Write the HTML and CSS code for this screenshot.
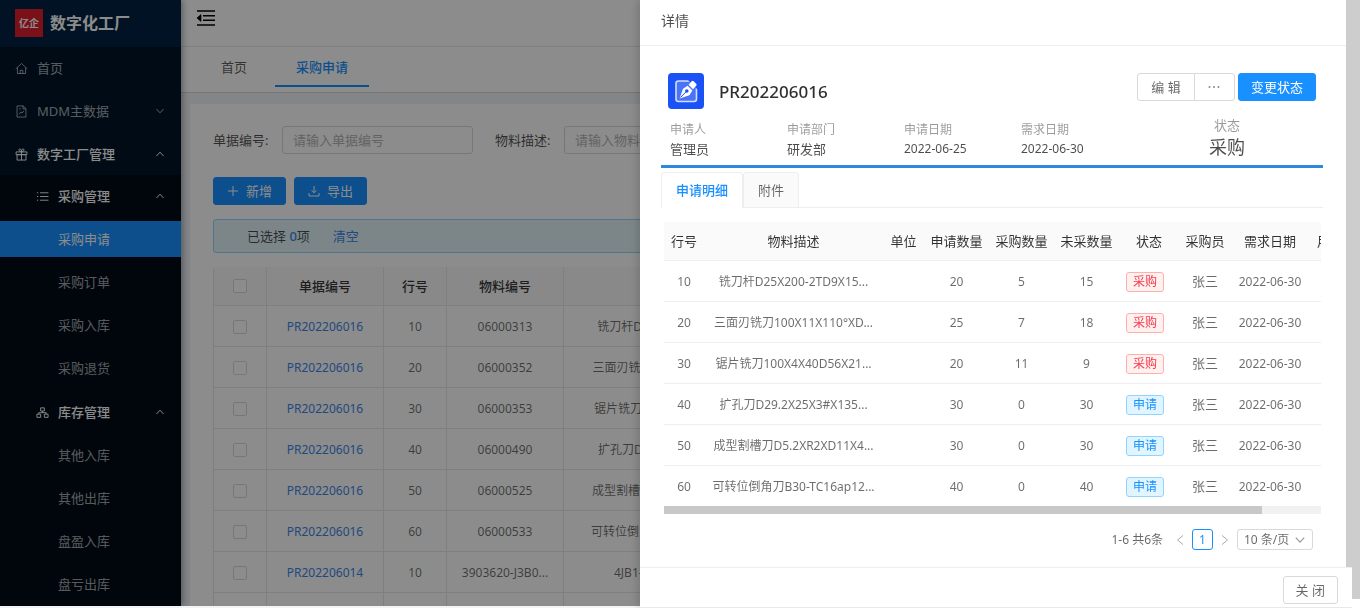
FILE: index.html
```html
<!DOCTYPE html>
<html lang="zh-CN">
<head>
<meta charset="utf-8">
<title>数字化工厂 - 采购申请</title>
<link rel="stylesheet" href="styles.css">
</head>
<body>
<svg class="defs" width="0" height="0" aria-hidden="true">
  <symbol id="up" viewBox="0 0 10 10"><path d="M1.500 7 5 3.200 8.500 7"/></symbol>
  <symbol id="down" viewBox="0 0 10 10"><path d="M1.500 3 5 6.800 8.500 3"/></symbol>
</svg>
<div class="app">
  <aside class="sider">
    <div class="brand"><span class="brand-mark">亿企</span><span class="brand-name">数字化工厂</span></div>
    <nav class="menu">
      <a class="item" href="#"><svg class="ico" viewBox="0 0 14 14"><path d="M.8 7.4 7 1.6l6.2 5.8M2.600 6v6.400h8.800V6M5.600 12.200V9h2.800v3.200"/></svg>首页</a>
      <button class="item"><svg class="ico" viewBox="0 0 14 14"><path d="M2.200 1h6.600l3 3v9H2.200zM8.600 1v3.200h3.200M4.400 10l2-2.600 1.400 1.200 1.800-2.400M4.400 4.200h2"/></svg>MDM主数据<svg class="arrow"><use href="#down"/></svg></button>
      <button class="item open"><svg class="ico" viewBox="0 0 14 14"><path d="M1.200 4.200h11.600v3H1.200zM2.200 7.200h9.600V13H2.200zM7 4.200V13M7 4.200C4 4.200 3.600 1 5.200 1 6.600 1 7 3 7 4.200 7 3 7.400 1 8.800 1c1.600 0 1.200 3.200-1.800 3.200"/></svg>数字工厂管理<svg class="arrow"><use href="#up"/></svg></button>
      <div class="submenu">
        <div class="group">
          <button class="item open sub"><svg class="ico" viewBox="0 0 14 14"><path d="M4.400 3h9M4.400 7h9M4.400 11h9M1 3h1.400M1 7h1.400M1 11h1.400"/></svg>采购管理<svg class="arrow"><use href="#up"/></svg></button>
          <a class="item leaf selected" href="#">采购申请</a>
          <a class="item leaf" href="#">采购订单</a>
          <a class="item leaf" href="#">采购入库</a>
          <a class="item leaf" href="#">采购退货</a>
        </div>
        <div class="group">
          <button class="item open sub"><svg class="ico" viewBox="0 0 14 14"><path d="M5 2h4v3.400H5zM1 8.800h4v3.400H1zM9 8.800h4v3.400H9zM7 5.400v1.800M3 8.800V7.200h8v1.600"/></svg>库存管理<svg class="arrow"><use href="#up"/></svg></button>
          <a class="item leaf" href="#">其他入库</a>
          <a class="item leaf" href="#">其他出库</a>
          <a class="item leaf" href="#">盘盈入库</a>
          <a class="item leaf" href="#">盘亏出库</a>
        </div>
      </div>
    </nav>
  </aside>
  <div class="main">
    <header class="topbar">
      <button class="fold" aria-label="收起菜单"><svg width="20" height="18" viewBox="0 0 20 18"><path d="M1 2h18M7 6.700h12M7 11.300h12M1 16h18" stroke="#000" stroke-width="1.600"/><path d="M5 5.600v6.800L1 9z"/></svg></button>
    </header>
    <nav class="page-tabs"><a href="#">首页</a><a class="active" href="#">采购申请</a></nav>
    <section class="card">
      <form class="search">
        <label for="q-no">单据编号:</label><input id="q-no" type="text" placeholder="请输入单据编号">
        <label for="q-desc">物料描述:</label><input id="q-desc" type="text" placeholder="请输入物料描述">
      </form>
      <div class="actions">
        <button class="btn primary"><svg width="12" height="12" viewBox="0 0 12 12"><path d="M6 1v10M1 6h10"/></svg>新增</button>
        <button class="btn primary"><svg width="12" height="12" viewBox="0 0 12 12"><path d="M6 1v6.600M3.600 5.400 6 7.800l2.400-2.400M1 8v3h10V8"/></svg>导出</button>
      </div>
      <div class="notice"><span>已选择 <b>0</b>项</span><a href="#">清空</a></div>
      <table class="list">
        <colgroup><col class="w53"><col class="w117"><col class="w63"><col class="w117"><col class="w217"><col></colgroup>
        <thead><tr><th><input type="checkbox" aria-label="全选"></th><th>单据编号</th><th>行号</th><th>物料编号</th><th>物料描述</th><th></th></tr></thead>
        <tbody>
          <tr><td><input type="checkbox" aria-label="选择第1行"></td><td><a href="#">PR202206016</a></td><td>10</td><td>06000313</td><td class="desc">铣刀杆D25X200-2TD9X15...</td><td></td></tr>
          <tr><td><input type="checkbox" aria-label="选择第2行"></td><td><a href="#">PR202206016</a></td><td>20</td><td>06000352</td><td class="desc">三面刃铣刀100X11X110°XD...</td><td></td></tr>
          <tr><td><input type="checkbox" aria-label="选择第3行"></td><td><a href="#">PR202206016</a></td><td>30</td><td>06000353</td><td class="desc">锯片铣刀100X4X40D56X21...</td><td></td></tr>
          <tr><td><input type="checkbox" aria-label="选择第4行"></td><td><a href="#">PR202206016</a></td><td>40</td><td>06000490</td><td class="desc">扩孔刀D29.2X25X3#X135...</td><td></td></tr>
          <tr><td><input type="checkbox" aria-label="选择第5行"></td><td><a href="#">PR202206016</a></td><td>50</td><td>06000525</td><td class="desc">成型割槽刀D5.2XR2XD11X4...</td><td></td></tr>
          <tr><td><input type="checkbox" aria-label="选择第6行"></td><td><a href="#">PR202206016</a></td><td>60</td><td>06000533</td><td class="desc">可转位倒角刀B30-TC16ap12...</td><td></td></tr>
          <tr><td><input type="checkbox" aria-label="选择第7行"></td><td><a href="#">PR202206014</a></td><td>10</td><td>3903620-J3B0...</td><td class="desc">4JB1-3903620-J3B0-1</td><td></td></tr>
          <tr><td></td><td></td><td></td><td></td><td></td><td></td></tr>
        </tbody>
      </table>
    </section>
  </div>
</div>
<div class="mask"></div>
<div class="drawer" role="dialog" aria-labelledby="drawer-title">
  <div class="drawer-top">
    <div class="drawer-page">
      <h2 id="drawer-title" class="drawer-title">详情</h2>
      <div class="detail">
        <div class="head">
          <svg class="doc-icon" width="36" height="36" viewBox="0 0 36 36" aria-hidden="true"><rect width="36" height="36" rx="4" fill="#1b52f5"/><rect x="8" y="8" width="20.500" height="20.500" rx="2.500" fill="#4a74f7" stroke="#d4defd" stroke-width="1.600"/><path d="M19 6h11v11z" fill="#1b52f5"/><path d="m11.600 25.400 3.400-9.600 4.600-3 4.800 4.600-3 4.800z" fill="#fff"/><path d="m12.500 24.500 5.400-5.600" stroke="#1b52f5" stroke-width="1"/><circle cx="18.800" cy="18" r="1.800" fill="#1b52f5"/><path d="m20.600 11.800 3-3.600q1-.9 2 0l2.600 2.600q.9 1 0 2l-3.200 3.400z" fill="#fff"/></svg>
          <h1>PR202206016</h1>
          <div class="head-actions">
            <div class="btn-group"><button class="btn">编 辑</button><button class="btn" aria-label="更多"><svg width="12" height="4" viewBox="0 0 12 4"><circle cx="1.500" cy="2" r="1"/><circle cx="6" cy="2" r="1"/><circle cx="10.500" cy="2" r="1"/></svg></button></div>
            <button class="btn primary">变更状态</button>
          </div>
        </div>
        <div class="info">
          <dl><dt>申请人</dt><dd>管理员</dd></dl>
          <dl><dt>申请部门</dt><dd>研发部</dd></dl>
          <dl><dt>申请日期</dt><dd class="num">2022-06-25</dd></dl>
          <dl><dt>需求日期</dt><dd class="num">2022-06-30</dd></dl>
          <dl class="state"><dt>状态</dt><dd>采购</dd></dl>
        </div>
        <div class="card-tabs"><button class="active">申请明细</button><button>附件</button></div>
        <div class="lines-wrap">
          <table class="lines">
            <colgroup><col class="w40"><col class="w179"><col class="w41"><col class="w65"><col class="w65"><col class="w65"><col class="w60"><col class="w52"><col class="w78"><col class="w68"></colgroup>
            <thead><tr><th>行号</th><th>物料描述</th><th>单位</th><th>申请数量</th><th>采购数量</th><th>未采数量</th><th>状态</th><th>采购员</th><th>需求日期</th><th>用途说明</th></tr></thead>
            <tbody>
              <tr><td>10</td><td class="desc">铣刀杆D25X200-2TD9X15...</td><td></td><td>20</td><td>5</td><td>15</td><td><span class="tag red">采购</span></td><td class="cn">张三</td><td>2022-06-30</td><td></td></tr>
              <tr><td>20</td><td class="desc">三面刃铣刀100X11X110°XD...</td><td></td><td>25</td><td>7</td><td>18</td><td><span class="tag red">采购</span></td><td class="cn">张三</td><td>2022-06-30</td><td></td></tr>
              <tr><td>30</td><td class="desc">锯片铣刀100X4X40D56X21...</td><td></td><td>20</td><td>11</td><td>9</td><td><span class="tag red">采购</span></td><td class="cn">张三</td><td>2022-06-30</td><td></td></tr>
              <tr><td>40</td><td class="desc">扩孔刀D29.2X25X3#X135...</td><td></td><td>30</td><td>0</td><td>30</td><td><span class="tag blue">申请</span></td><td class="cn">张三</td><td>2022-06-30</td><td></td></tr>
              <tr><td>50</td><td class="desc">成型割槽刀D5.2XR2XD11X4...</td><td></td><td>30</td><td>0</td><td>30</td><td><span class="tag blue">申请</span></td><td class="cn">张三</td><td>2022-06-30</td><td></td></tr>
              <tr><td>60</td><td class="desc">可转位倒角刀B30-TC16ap12...</td><td></td><td>40</td><td>0</td><td>40</td><td><span class="tag blue">申请</span></td><td class="cn">张三</td><td>2022-06-30</td><td></td></tr>
            </tbody>
          </table>
          <div class="hbar"><div class="hthumb"></div></div>
        </div>
        <div class="pager">
          <span class="total">1-6 共6条</span>
          <button class="step" aria-label="上一页"><svg width="8" height="12" viewBox="0 0 8 12"><path d="M7 1.500 1.500 6 7 10.500"/></svg></button>
          <button class="page">1</button>
          <button class="step" aria-label="下一页"><svg width="8" height="12" viewBox="0 0 8 12"><path d="M1 1.500 6.500 6 1 10.500"/></svg></button>
          <label class="size"><select aria-label="每页条数"><option>10 条/页</option></select><svg width="12" height="12"><use href="#down"/></svg></label>
        </div>
      </div>
    </div>
    <div class="vbar"></div>
  </div>
  <div class="drawer-bottom">
    <footer class="drawer-footer"><button class="btn">关 闭</button></footer>
    <div class="vbar narrow"></div>
  </div>
</div>
</body>
</html>
```

FILE: styles.css
```css
* { box-sizing: border-box; }
body {
  margin: 0;
  height: 100vh;
  padding-bottom: 2px;
  overflow: hidden;
  background: #f4f4f6;
  color: rgba(0, 0, 0, .7);
  font: 13px/20px "Noto Sans", "Noto Sans CJK SC", sans-serif;
}
a { color: #3d86e8; text-decoration: none; }
button, input, select { font: inherit; color: inherit; }
button { border: 0; padding: 0; background: none; cursor: pointer; }
svg { fill: none; stroke: currentColor; flex: none; }
h1, h2, dl, dd { margin: 0; }
.defs { position: absolute; }
.app { display: flex; height: 100%; overflow: hidden; background: #f0f2f5; }

/* sidebar */
.sider { width: 181px; flex: none; background: #001529; color: rgba(255, 255, 255, .65); overflow: hidden; box-shadow: 2px 0 6px rgba(0, 21, 41, .35); z-index: 1; }
.brand { display: flex; align-items: center; gap: 7px; height: 47px; padding: 0 15px 2px; background: #002140; }
.brand-mark { display: grid; place-items: center; width: 28px; height: 28px; background: #e0202c; color: #fff; font-size: 10px; font-weight: 700; }
.brand-name { color: #fff; font-size: 16px; font-weight: 700; }
.menu, .group { display: flex; flex-direction: column; gap: 7px; }
.menu { padding-top: 3px; }
.item { display: flex; align-items: center; gap: 9px; width: 100%; height: 36px; padding: 0 16px 0 15px; color: inherit; text-align: left; }
.item.open { color: #fff; font-weight: 500; }
.ico { width: 13px; height: 13px; }
.arrow { width: 10px; height: 10px; margin-left: auto; }
.submenu { margin-top: -4px; background: #000c17; }
.group { padding: 3px 0 5px; }
.sub { padding-left: 36px; }
.leaf { padding-left: 58px; }
.item.selected { background: #1890ff; color: #fff; }

/* page area */
.main { flex: 1; min-width: 0; display: flex; flex-direction: column; }
.topbar { height: 47px; padding: 9px 15px; background: #fff; border-bottom: 1px solid #e8e8e8; }
.fold { display: flex; }
.fold svg { fill: #000; }
.page-tabs { display: flex; gap: 7px; height: 46px; padding-left: 16px; background: #fff; border-bottom: 1px solid #d4d4d4; }
.page-tabs a { height: 40px; padding: 0 21px; line-height: 41px; color: rgba(0, 0, 0, .65); }
.page-tabs a:first-child { padding-left: 24px; }
.page-tabs .active { color: #1890ff; font-weight: 500; border-bottom: 2px solid #1890ff; }
.card { flex: 1; min-height: 0; margin: 11px 9px 0; padding: 22px 23px 0; background: #fff; overflow: hidden; }
.search { display: flex; align-items: center; }
.search label { width: 69px; flex: none; white-space: nowrap; }
.search input { width: 191px; flex: none; height: 28px; margin-right: 22px; padding: 0 10px; border: 1px solid #d9d9d9; border-radius: 3px; background: #fff; }
.search input::placeholder { color: #b4b4b4; }
.actions { display: flex; gap: 8px; margin: 23px 0 14px; }
.btn { display: inline-flex; align-items: center; justify-content: center; gap: 7px; height: 28px; padding: 0 12px; border: 1px solid #d9d9d9; border-radius: 3px; background: #fff; color: rgba(0, 0, 0, .6); white-space: nowrap; }
.actions .btn { width: 73px; padding: 0; }
.btn.primary { background: #1890ff; border-color: #1890ff; color: #fff; }
.notice { display: flex; gap: 23px; height: 34px; margin-bottom: 14px; padding-left: 33px; line-height: 32px; border: 1px solid #91d5ff; border-radius: 3px; background: #e2f5fa; }
.notice b { color: #3d86e8; font-weight: 500; }

table { border-collapse: separate; border-spacing: 0; table-layout: fixed; }
th, td { padding: 0; text-align: center; white-space: nowrap; overflow: hidden; }
th { font-size: 13px; font-weight: 400; color: rgba(0, 0, 0, .8); }
td { padding-top: 1px; font-size: 12px; color: rgba(0, 0, 0, .58); }
.list { width: 100%; border-left: 1px solid #e8e8e8; border-radius: 3px; }
.list th { height: 39px; background: #fafafa; border-right: 1px solid #e8e8e8; border-bottom: 1px solid #e8e8e8; font-weight: 500; }
.list td { height: 41px; padding-top: 2px; border-right: 1px solid #e8e8e8; border-bottom: 1px solid #e8e8e8; }
.list input { appearance: none; display: block; width: 14px; height: 14px; margin: 0 auto; border: 1px solid #d9d9d9; border-radius: 2px; background: #fff; }
.w40 { width: 40px; } .w41 { width: 41px; } .w52 { width: 52px; } .w53 { width: 53px; }
.w60 { width: 60px; } .w63 { width: 63px; } .w65 { width: 65px; } .w68 { width: 68px; }
.w78 { width: 78px; } .w117 { width: 117px; } .w179 { width: 179px; } .w217 { width: 217px; }

/* drawer */
.mask { position: fixed; inset: 0 0 2px; z-index: 2; background: rgba(0, 0, 0, .45); }
.drawer { position: fixed; inset: 0 0 0 auto; z-index: 3; width: 720px; display: flex; flex-direction: column; background: #fff; box-shadow: -3px 0 8px rgba(0, 0, 0, .15); }
.drawer-top { flex: 1; min-height: 0; display: flex; }
.drawer-page { flex: 1; min-width: 0; }
.vbar { width: 14px; background: #cdcdcd; }
.narrow { width: 8px; margin-bottom: 9px; }
.drawer-title { height: 46px; padding-left: 21px; border-bottom: 1px solid #eee; font-size: 14px; font-weight: 400; line-height: 42px; }
.detail { padding: 27px 23px 0 21px; }
.head { display: flex; height: 36px; padding: 0 7px; }
.doc-icon { stroke: none; }
.head h1 { margin-left: 15px; font-size: 17px; font-weight: 500; line-height: 38px; color: rgba(0, 0, 0, .82); }
.head-actions { display: flex; gap: 3px; margin-left: auto; }
.btn-group { display: flex; }
.btn-group .btn:first-child { width: 58px; border-radius: 3px 0 0 3px; }
.btn-group .btn + .btn { width: 41px; margin-left: -1px; border-radius: 0 3px 3px 0; }
.btn-group svg { fill: #888; stroke: none; }
.info { display: flex; padding: 12px 9px 0; height: 59px; border-bottom: 3px solid #2b8ae0; }
.info dl { width: 117px; }
.info dt { font-size: 12px; line-height: 18px; color: rgba(0, 0, 0, .4); }
.info dd { line-height: 20px; }
.info .num { font-size: 12px; }
.info .state { margin: -5px 0 0 auto; width: 174px; text-align: center; }
.info .state dt { font-size: 13px; }
.info .state dd { font-size: 18px; line-height: 26px; }
.card-tabs { display: flex; margin-top: 4px; height: 36px; border-bottom: 1px solid #eee; }
.card-tabs button { height: 36px; padding: 0 14px; border: 1px solid #eee; border-radius: 3px 3px 0 0; background: #fafafa; color: rgba(0, 0, 0, .6); }
.card-tabs .active { background: #fff; border-bottom-color: #fff; color: #1890ff; font-weight: 500; }
.lines-wrap { margin: 14px 2px 0 3px; overflow: hidden; }
.lines { width: 713px; }
.lines th { height: 39px; padding-bottom: 1px; background: #fafafa; border-bottom: 1px solid #eee; }
.lines td { height: 41px; border-bottom: 1px solid #eee; }
.lines tbody tr:last-child td { height: 40px; border-bottom: 0; }
.lines .cn { padding: 0; font-size: 13px; }
.tag { display: inline-block; width: 38px; height: 20px; margin-right: 8px; border: 1px solid; border-radius: 3px; line-height: 18px; vertical-align: middle; }
.red { color: #f5364a; background: #fff1f0; border-color: #ffb0ab; }
.blue { color: #1890ff; background: #e0f5ff; border-color: #91d5ff; }
.hbar { height: 8px; background: #f1f1f1; }
.hthumb { width: 91%; height: 100%; background: #c8c8c8; }
.pager { display: flex; align-items: center; justify-content: flex-end; margin-top: 15px; padding-right: 10px; color: rgba(0, 0, 0, .6); font-size: 12px; }
.step { display: flex; justify-content: center; width: 8px; margin: 0 8px; color: #aaa; }
.total { margin-right: 5px; }
.page { width: 21px; height: 21px; border: 1px solid #1890ff; border-radius: 3px; color: #1890ff; line-height: 18px; }
.size { position: relative; }
.size select { appearance: none; display: block; width: 76px; height: 21px; padding: 0 6px; border: 1px solid #d9d9d9; border-radius: 3px; background: #fff; font-size: 12px; }
.size svg { position: absolute; right: 7px; top: 5px; color: #999; }
.drawer-bottom { display: flex; height: 41px; }
.drawer-footer { flex: 1; display: flex; justify-content: flex-end; align-items: flex-start; padding: 8px 14px 0; border-top: 1px solid #eee; border-bottom: 1px solid #e8e8e8; }
```
